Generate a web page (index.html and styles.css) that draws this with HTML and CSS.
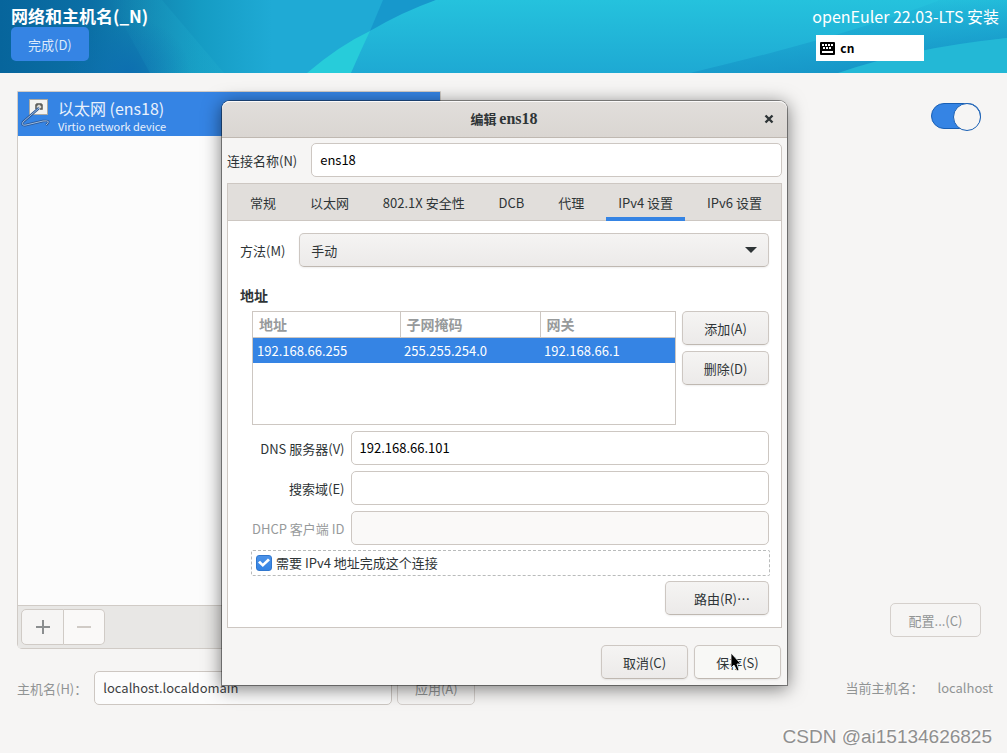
FILE: index.html
```html
<!DOCTYPE html>
<html lang="zh-CN">
<head>
<meta charset="utf-8">
<title>网络和主机名</title>
<link rel="stylesheet" href="styles.css">
</head>
<body>
<header class="banner">
  <svg class="banner-art" viewBox="0 0 1007 73" preserveAspectRatio="none" aria-hidden="true">
    <defs>
      <linearGradient id="base" x1="0" y1="0" x2="1" y2="0">
        <stop offset="0" stop-color="#07659c"/>
        <stop offset="0.09" stop-color="#0b6fa5"/>
        <stop offset="0.14" stop-color="#1284b0"/>
        <stop offset="0.2" stop-color="#159cc4"/>
        <stop offset="0.27" stop-color="#1faad5"/>
        <stop offset="1" stop-color="#1faad5"/>
      </linearGradient>
      <radialGradient id="fold">
        <stop offset="0" stop-color="#0d6fb0"/>
        <stop offset="1" stop-color="#0d6fb0" stop-opacity="0"/>
      </radialGradient>
      <linearGradient id="ridge" x1="0" y1="0" x2="1" y2="0">
        <stop offset="0" stop-color="#1fa9cb" stop-opacity="0"/>
        <stop offset="1" stop-color="#1fa9cb" stop-opacity=".45"/>
      </linearGradient>
      <linearGradient id="wave" x1="0" y1="0" x2="0" y2="1">
        <stop offset="0" stop-color="#25c2dd"/>
        <stop offset="1" stop-color="#1ea9d3"/>
      </linearGradient>
      <linearGradient id="shade" x1="0" y1="0" x2="0.4" y2="1">
        <stop offset="0.2" stop-color="#189fce" stop-opacity="0"/>
        <stop offset="1" stop-color="#1797c8"/>
      </linearGradient>
    </defs>
    <rect width="1007" height="73" fill="url(#base)"/>
    <ellipse cx="128" cy="73" rx="62" ry="56" fill="url(#fold)"/>
    <path d="M110 0H162L224 73H150Z" fill="url(#ridge)"/>
    <path d="M383 0H436L370 31Z" fill="#1798cc"/>
    <path d="M307 73L370 31Q402 12 436 0H1007V73Z" fill="url(#wave)"/>
    <path d="M307 73Q340 45 370 31Q362 48 351 73Z" fill="#27ccda"/>
    <path d="M690 73Q850 35 940 0H1007V38Q920 50 845 73Z" fill="url(#shade)"/>
    <path d="M838 73Q910 48 1007 38V73Z" fill="#23b8d6"/>
  </svg>
  <div class="banner-left">
    <h1 class="banner-title">网络和主机名(_N)</h1>
    <button class="done" type="button">完成(D)</button>
  </div>
  <div class="banner-right">
    <span class="product">openEuler 22.03-LTS 安装</span>
    <button class="keyboard" type="button">
      <svg width="15" height="13" viewBox="0 0 15 13" aria-hidden="true">
        <rect width="15" height="13" rx="1" fill="#000"/>
        <path d="M2 3h2M5 3h2M8 3h2M11 3h2M3 6h2M6 6h2M9 6h2M2 10h11" stroke="#fff" stroke-width="2"/>
      </svg>
      cn
    </button>
  </div>
</header>

<main class="content">
  <div class="device-area">
    <section class="devices">
      <div class="device">
        <svg width="32" height="32" viewBox="0 0 32 32" aria-hidden="true">
          <rect x="8.500" y="3.500" width="18" height="15" fill="#f3f3f1" stroke="#aaa9a3"/>
          <path d="M15 13V9h1V8h4v1h1v4h-2" fill="#d8d8d4" stroke="#555753" stroke-width="1.500"/>
          <path d="M18 12L2 26Q0 30 5 29L22 25Q31 24 25 29" fill="none" stroke="#2a5796" stroke-width="2.400"/>
          <path d="M18 12L2 26Q0 30 5 29L22 25Q31 24 25 29" fill="none" stroke="#9dbce0" stroke-width="1"/>
        </svg>
        <div class="device-text">
          <span class="device-name">以太网 (ens18)</span>
          <span class="device-model">Virtio network device</span>
        </div>
      </div>
      <div class="device-space"></div>
      <div class="device-tools">
        <button class="tool" type="button" aria-label="添加设备"><svg width="14" height="14" viewBox="0 0 14 14"><path d="M0 7h14M7 0v14" stroke="#8b8e8f" stroke-width="2"/></svg></button>
        <button class="tool tool-off" type="button" aria-label="删除设备" disabled><svg width="14" height="14" viewBox="0 0 14 14"><path d="M0 7h14" stroke="#d0cbc6" stroke-width="2"/></svg></button>
      </div>
    </section>
    <div class="device-side">
      <input class="switch" type="checkbox" role="switch" aria-label="以太网" checked>
      <button class="btn btn-faint btn-config" type="button" disabled>配置...(C)</button>
    </div>
  </div>
  <div class="host">
    <label for="hostname">主机名(H)：</label>
    <input class="field host-field" id="hostname" type="text" value="localhost.localdomain">
    <button class="btn btn-faint host-apply" type="button" disabled>应用(A)</button>
    <span class="host-current">当前主机名：</span>
    <span class="host-value">localhost</span>
  </div>
</main>
<div class="watermark">CSDN @ai15134626825</div>

<div class="dialog" role="dialog" aria-labelledby="dialog-title">
  <div class="dialog-bar">
    <h2 class="dialog-title" id="dialog-title">编辑 <span class="dialog-device">ens18</span></h2>
    <button class="close" type="button" aria-label="关闭"><svg width="10" height="10" viewBox="0 0 10 10"><path d="M1.500 1.500l7 7M8.500 1.500l-7 7" stroke="#2e3436" stroke-width="2.400"/></svg></button>
  </div>
  <div class="dialog-body">
    <div class="name-row">
      <label for="conn">连接名称(N)</label>
      <input class="field" id="conn" type="text" value="ens18">
    </div>
    <div class="notebook">
      <div class="tabs" role="tablist">
        <button class="tab" role="tab" type="button">常规</button>
        <button class="tab" role="tab" type="button">以太网</button>
        <button class="tab" role="tab" type="button">802.1X 安全性</button>
        <button class="tab" role="tab" type="button">DCB</button>
        <button class="tab" role="tab" type="button">代理</button>
        <button class="tab tab-on" role="tab" type="button" aria-selected="true">IPv4 设置</button>
        <button class="tab" role="tab" type="button">IPv6 设置</button>
      </div>
      <div class="panel">
        <div class="method">
          <label for="method">方法(M)</label>
          <div class="combo">
            <select class="combo-select" id="method"><option>手动</option></select>
          </div>
        </div>
        <h3 class="section">地址</h3>
        <div class="inner">
          <div class="addresses">
            <div class="table-box">
              <table class="table">
                <colgroup><col class="col-address"><col class="col-mask"><col></colgroup>
                <thead><tr><th>地址</th><th>子网掩码</th><th>网关</th></tr></thead>
                <tbody><tr><td>192.168.66.255</td><td>255.255.254.0</td><td>192.168.66.1</td></tr></tbody>
              </table>
            </div>
            <div class="address-actions">
              <button class="btn" type="button">添加(A)</button>
              <button class="btn" type="button">删除(D)</button>
            </div>
          </div>
          <div class="form">
            <label for="dns">DNS 服务器(V)</label>
            <input class="field" id="dns" type="text" value="192.168.66.101">
            <label for="search">搜索域(E)</label>
            <input class="field" id="search" type="text">
            <label class="label-off" for="dhcp">DHCP 客户端 ID</label>
            <input class="field" id="dhcp" type="text" disabled>
          </div>
          <label class="require"><input class="check" type="checkbox" checked>需要 IPv4 地址完成这个连接</label>
          <button class="btn routes" type="button">路由(R)⋯</button>
        </div>
      </div>
    </div>
    <div class="actions">
      <button class="btn" type="button">取消(C)</button>
      <button class="btn btn-hover" type="button">保存(S)
        <svg class="pointer" width="12" height="20" viewBox="0 0 12 20" aria-hidden="true"><path d="M1 1v15l3-3 3 6 2-1-2-6h4z" fill="#000" stroke="#fff" stroke-width=".8"/></svg>
      </button>
    </div>
  </div>
</div>
</body>
</html>
```
FILE: styles.css
```css
* { box-sizing: border-box; }

body {
  margin: 0;
  min-height: 100vh;
  position: relative;
  display: flex;
  flex-direction: column;
  background: #f6f5f4;
  color: #2e3436;
  font: 13px/20px "Noto Sans CJK SC", sans-serif;
  overflow: hidden;
}

button, input, select { font: inherit; color: inherit; margin: 0; }
h1, h2, h3 { margin: 0; }
label { padding-top: 2px; }

.banner {
  position: relative;
  display: flex;
  justify-content: space-between;
  height: 73px;
  padding: 4px 8px 0 11px;
  color: #fff;
}
.banner-art { position: absolute; inset: 0; width: 100%; height: 100%; }
.banner-left, .banner-right {
  position: relative;
  display: flex;
  flex-direction: column;
  align-items: flex-start;
}
.banner-title { font-size: 17px; line-height: 23px; }
.done {
  height: 34px;
  padding: 2px 17px 0;
  border: 0;
  border-radius: 5px;
  background: #3584e4;
  color: #dce9fa;
}
.product { font-size: 16px; line-height: 24px; }
.keyboard {
  display: flex;
  align-items: center;
  gap: 5px;
  width: 108px;
  height: 26px;
  margin: 7px 0 0 4px;
  padding: 0 4px;
  border: 0;
  background: #fff;
  color: #000;
  font-size: 12px;
  font-weight: bold;
}

.content { padding: 18px 14px 0 17px; }
.device-area { display: flex; gap: 12px; height: 558px; }
.devices {
  display: flex;
  flex-direction: column;
  flex: 0 1 424px;
  border: 1px solid #d0cbc6;
  border-radius: 0 0 5px 5px;
  background: #fcfcfc;
}
.device {
  display: flex;
  gap: 5px;
  height: 44px;
  padding: 4px 3px;
  background: #3584e4;
  color: #e9f1fc;
}
.device-text { display: flex; flex-direction: column; }
.device-name { font-size: 16px; line-height: 24px; }
.device-model { font-size: 11px; line-height: 12px; }
.device-space { flex: 1; }
.device-tools {
  display: flex;
  padding: 3px;
  border-top: 1px solid #d0cbc6;
  background: #e8e7e5;
}
.tool {
  display: flex;
  align-items: center;
  justify-content: center;
  width: 43px;
  height: 36px;
  border: 1px solid #d0cbc6;
  border-radius: 5px 0 0 5px;
  background: #f6f5f4;
}
.tool-off { width: 41px; border-left: 0; border-radius: 0 5px 5px 0; background: #faf9f8; }
.device-side {
  flex: 1;
  display: flex;
  flex-direction: column;
  align-items: flex-end;
  justify-content: space-between;
  padding: 12px;
}
.switch {
  appearance: none;
  width: 50px;
  height: 26px;
  border: 1px solid #185fb4;
  border-radius: 13px;
  background: #3584e4;
}
.switch::before {
  content: "";
  display: block;
  width: 26px;
  height: 26px;
  margin: -1px -1px 0 auto;
  border: 1px solid #185fb4;
  border-radius: 50%;
  background: #f6f5f4;
}

.field {
  flex: 1;
  min-width: 0;
  width: 100%;
  height: 34px;
  padding: 0 8px 2px;
  border: 1px solid #cdc7c2;
  border-radius: 5px;
  background: #fff;
  color: #000;
}
.field:disabled { background: #faf9f8; }

.btn {
  position: relative;
  height: 34px;
  min-width: 87px;
  padding: 2px 16px 0;
  border: 1px solid #cdc7c2;
  border-bottom-color: #bfb8b1;
  border-radius: 5px;
  background: linear-gradient(#f5f4f3, #eceae9);
  box-shadow: 0 1px 2px rgba(0, 0, 0, .07);
}
.btn-faint {
  border-color: #d5d0cc;
  background: transparent;
  box-shadow: none;
  color: #919494;
}
.btn-config { min-width: 91px; }
.btn-hover { background: #f8f8f6; }

.host {
  display: flex;
  align-items: center;
  margin-top: 22px;
  color: #919494;
}
.host-field { flex: 0 1 298px; margin-left: 7px; color: #3c4042; background: #fcfcfc; }
.host-apply { min-width: 78px; margin-left: 5px; }
.host-current { margin-left: auto; }
.host-value { margin-left: 14px; }

.watermark {
  margin: auto 15px 4px auto;
  color: #8f8f8f;
  font: 19px/24px "Liberation Sans", sans-serif;
  text-shadow: -1px -1px #fff;
}

.dialog {
  position: absolute;
  top: 101px;
  left: 222px;
  right: 220px;
  border-radius: 8px 8px 0 0;
  background: #f6f5f4;
  box-shadow: 0 0 0 1px rgba(0, 0, 0, .4), 0 3px 18px 1px rgba(0, 0, 0, .5);
}
.dialog-bar {
  display: flex;
  align-items: center;
  height: 37px;
  padding: 0 13px 0 22px;
  border-bottom: 1px solid #bfb8b1;
  border-radius: 8px 8px 0 0;
  background: linear-gradient(#e1dedb, #dad6d2);
  box-shadow: inset 0 1px #fbfafa;
}
.dialog-title { flex: 1; text-align: center; font-size: 13px; font-weight: bold; }
.dialog-device { font: bold 16px/20px "Liberation Serif", serif; }
.close { display: flex; padding: 0; border: 0; background: none; }
.dialog-body { padding: 5px 5px 6px; }
.name-row { display: flex; align-items: center; gap: 14px; }

.notebook { margin-top: 6px; border: 1px solid #cdc7c2; background: #fff; }
.tabs {
  display: flex;
  justify-content: space-between;
  padding: 0 7px 0 10px;
  border-bottom: 1px solid #cdc7c2;
  background: #e1dedb;
}
.tab {
  height: 37px;
  margin-bottom: -1px;
  padding: 4px 12px 0;
  border: 0;
  border-bottom: 4px solid transparent;
  background: none;
}
.tab-on { border-bottom-color: #3584e4; }

.panel { padding: 12px; }
.method { display: flex; align-items: center; gap: 14px; }
.combo { position: relative; flex: 1; }
.combo-select {
  appearance: none;
  display: block;
  width: 100%;
  height: 34px;
  padding: 2px 11px 0;
  border: 1px solid #cdc7c2;
  border-bottom-color: #bfb8b1;
  border-radius: 5px;
  background: linear-gradient(#f5f4f3, #eceae9);
  box-shadow: 0 1px 2px rgba(0, 0, 0, .07);
}
.combo::after {
  content: "";
  position: absolute;
  top: 14px;
  right: 12px;
  border: 6px solid transparent;
  border-top-color: #2e3436;
  border-bottom: 0;
}
.section { margin: 18px 0 6px; font-size: 14px; }
.inner { display: flex; flex-direction: column; gap: 6px; margin-left: 12px; }
.addresses { display: flex; gap: 6px; height: 114px; }
.table-box { flex: 1; border: 1px solid #cdc7c2; }
.table { width: 100%; border-collapse: collapse; table-layout: fixed; text-align: left; }
.col-address { width: 147px; }
.col-mask { width: 140px; }
.table th {
  height: 25px;
  padding: 0 6px;
  border-bottom: 1px solid #cdc7c2;
  border-right: 1px solid #cdc7c2;
  color: #979a9b;
  font-size: 14px;
}
.table th:last-child { border-right: 0; }
.table td { height: 26px; padding: 2px 4px 0; background: #3584e4; color: #fff; }
.address-actions { display: flex; flex-direction: column; gap: 6px; }
.form {
  display: grid;
  grid-template-columns: auto 1fr;
  gap: 6px;
  align-items: center;
  text-align: right;
}
.label-off { color: #979a9b; }
.require {
  display: flex;
  align-items: center;
  gap: 4px;
  height: 26px;
  margin: -1px;
  padding: 0 4px;
  border: 1px dashed #b9bbbb;
  border-radius: 2px;
}
.check {
  appearance: none;
  width: 16px;
  height: 16px;
  border: 1px solid #3077cf;
  border-radius: 3px;
  background: linear-gradient(#4b92e8, #3584e4);
}
.check::before {
  content: "";
  display: block;
  width: 12px;
  height: 10px;
  margin: 2px 1px;
  background: #fff;
  clip-path: polygon(0 45%, 17% 28%, 40% 55%, 83% 5%, 100% 22%, 40% 90%);
}
.routes { align-self: flex-end; width: 104px; padding: 2px 10px 0 20px; }
.actions { display: flex; justify-content: flex-end; gap: 6px; margin: 17px 1px 0; }
.pointer { position: absolute; left: 35px; top: 6px; }
```
